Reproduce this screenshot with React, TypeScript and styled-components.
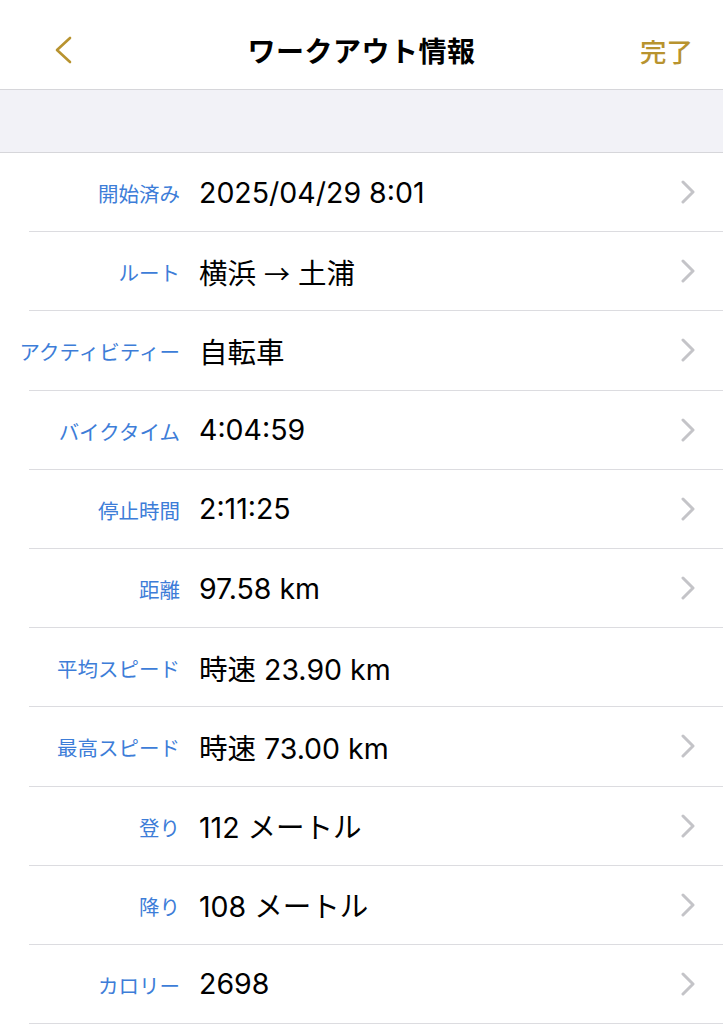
import styled, { createGlobalStyle } from 'styled-components';

const GlobalStyle = createGlobalStyle`
  html, body {
    margin: 0;
    padding: 0;
    background: #ffffff;
  }
  body {
    font-family: "Inter", "Noto Sans CJK JP", sans-serif;
    -webkit-font-smoothing: antialiased;
  }
`;

const Page = styled.div`
  width: 723px;
  min-height: 1024px;
  background: #ffffff;
  overflow: hidden;
`;

const NavBar = styled.header`
  height: 90px;
  box-sizing: border-box;
  padding-top: 11px;
  display: grid;
  grid-template-columns: 120px 1fr 120px;
  align-items: center;
  border-bottom: 1px solid #d6d6da;
  background: #ffffff;
`;

const BackButton = styled.button`
  background: none;
  border: none;
  padding: 0 0 0 53px;
  display: flex;
  align-items: center;
  cursor: pointer;
`;

const Title = styled.h1`
  margin: 0;
  text-align: center;
  font-family: "Noto Sans CJK JP", sans-serif;
  font-size: 28px;
  font-weight: 700;
  color: #000000;
  letter-spacing: 0.5px;
`;

const DoneButton = styled.button`
  background: none;
  border: none;
  padding: 0 30px 0 0;
  justify-self: end;
  font-family: "Noto Sans CJK JP", sans-serif;
  font-size: 26.5px;
  font-weight: 500;
  color: #b8932f;
  cursor: pointer;
`;

const Spacer = styled.div`
  height: 62px;
  background: #f2f2f7;
  border-bottom: 1px solid #d6d6da;
`;

const List = styled.ul`
  list-style: none;
  margin: 0;
  padding: 0;
`;

const Row = styled.li`
  position: relative;
  height: 78.2px;
  padding-bottom: 1px;
  display: grid;
  grid-template-columns: 180px 1fr 44px;
  column-gap: 19px;
  align-items: center;

  &::after {
    content: '';
    position: absolute;
    left: 29px;
    right: 0;
    bottom: 0;
    height: 1px;
    background: #dcdce0;
  }
`;

const Label = styled.span`
  text-align: right;
  font-family: "Noto Sans CJK JP", sans-serif;
  font-size: 20.5px;
  color: #3d7dd8;
  white-space: nowrap;
  margin-top: 2px;
`;

const Value = styled.span`
  font-family: "Inter", "Noto Sans CJK JP", sans-serif;
  font-size: 28.5px;
  color: #000000;
  white-space: nowrap;
`;

const Arrow = styled.span`
  font-family: "Noto Sans CJK JP", sans-serif;
  font-size: 26px;
`;

const ChevronSlot = styled.span`
  display: flex;
  align-items: center;
  padding-left: 2px;
`;

const BackIcon = () => (
  <svg width="20" height="30" viewBox="0 0 20 30" fill="none">
    <path d="M17 3 L4 15 L17 27" stroke="#b8932f" strokeWidth="2.6" strokeLinecap="round" strokeLinejoin="round" />
  </svg>
);

const Chevron = () => (
  <svg width="14" height="24" viewBox="0 0 14 24" fill="none">
    <path d="M2 2 L12 12 L2 22" stroke="#c4c4c8" strokeWidth="3" strokeLinecap="round" strokeLinejoin="round" />
  </svg>
);

const rows: { label: string; value: React.ReactNode; link: boolean }[] = [
  { label: '開始済み', value: '2025/04/29 8:01', link: true },
  { label: 'ルート', value: <>横浜 <Arrow>→</Arrow> 土浦</>, link: true },
  { label: 'アクティビティー', value: '自転車', link: true },
  { label: 'バイクタイム', value: '4:04:59', link: true },
  { label: '停止時間', value: '2:11:25', link: true },
  { label: '距離', value: '97.58 km', link: true },
  { label: '平均スピード', value: '時速 23.90 km', link: false },
  { label: '最高スピード', value: '時速 73.00 km', link: true },
  { label: '登り', value: '112 メートル', link: true },
  { label: '降り', value: '108 メートル', link: true },
  { label: 'カロリー', value: '2698', link: true },
];

export default function App() {
  return (
    <Page>
      <GlobalStyle />
      <NavBar>
        <BackButton aria-label="戻る">
          <BackIcon />
        </BackButton>
        <Title>ワークアウト情報</Title>
        <DoneButton>完了</DoneButton>
      </NavBar>
      <Spacer />
      <List>
        {rows.map((r) => (
          <Row key={r.label}>
            <Label>{r.label}</Label>
            <Value>{r.value}</Value>
            <ChevronSlot>{r.link && <Chevron />}</ChevronSlot>
          </Row>
        ))}
      </List>
    </Page>
  );
}
